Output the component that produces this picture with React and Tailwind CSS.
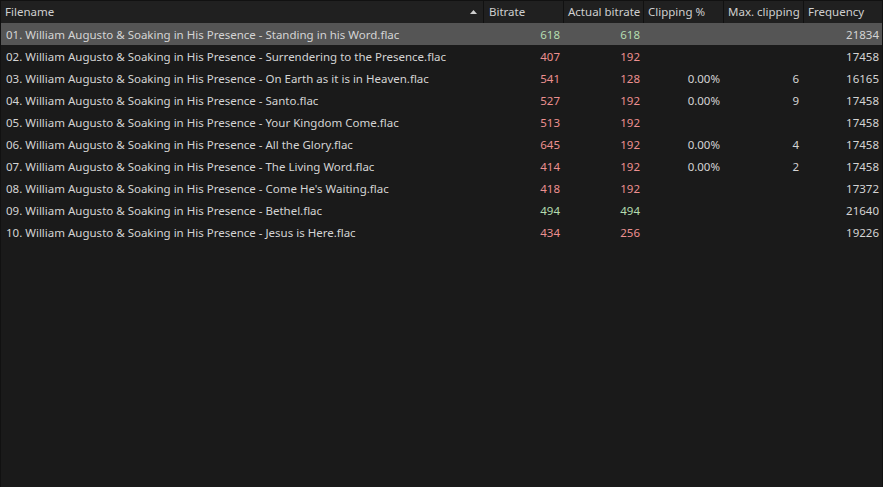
import React from 'react';

const rows = [
  { name: '01. William Augusto & Soaking in His Presence - Standing in his Word.flac', bitrate: 618, actual: 618, clip: '', max: '', freq: 21834, good: true },
  { name: '02. William Augusto & Soaking in His Presence - Surrendering to the Presence.flac', bitrate: 407, actual: 192, clip: '', max: '', freq: 17458 },
  { name: '03. William Augusto & Soaking in His Presence - On Earth as it is in Heaven.flac', bitrate: 541, actual: 128, clip: '0.00%', max: 6, freq: 16165 },
  { name: '04. William Augusto & Soaking in His Presence - Santo.flac', bitrate: 527, actual: 192, clip: '0.00%', max: 9, freq: 17458 },
  { name: '05. William Augusto & Soaking in His Presence - Your Kingdom Come.flac', bitrate: 513, actual: 192, clip: '', max: '', freq: 17458 },
  { name: '06. William Augusto & Soaking in His Presence - All the Glory.flac', bitrate: 645, actual: 192, clip: '0.00%', max: 4, freq: 17458 },
  { name: '07. William Augusto & Soaking in His Presence - The Living Word.flac', bitrate: 414, actual: 192, clip: '0.00%', max: 2, freq: 17458 },
  { name: "08. William Augusto & Soaking in His Presence - Come He's Waiting.flac", bitrate: 418, actual: 192, clip: '', max: '', freq: 17372 },
  { name: '09. William Augusto & Soaking in His Presence - Bethel.flac', bitrate: 494, actual: 494, clip: '', max: '', freq: 21640, good: true },
  { name: '10. William Augusto & Soaking in His Presence - Jesus is Here.flac', bitrate: 434, actual: 256, clip: '', max: '', freq: 19226 },
];

const App = () => {
  return (
    <div
      className="w-[883px] h-[487px] bg-[#1a1a1a] text-[11.5px] text-[#d4d4d4] overflow-hidden border-x border-[#111] whitespace-nowrap"
      style={{ fontFamily: '"Noto Sans", "Open Sans", sans-serif' }}
    >
      {/* Header */}
      <div className="flex h-[23px] bg-[#202020] border-t border-[#111] text-[#cfcfcf] leading-[22px]">
        <div className="w-[483px] flex items-center justify-between pl-[4px] pr-[6px] border-r border-[#111]">
          <span>Filename</span>
          <svg width="7" height="4" viewBox="0 0 7 4">
            <path d="M0 4 L3.5 0 L7 4 Z" fill="#cfcfcf" />
          </svg>
        </div>
        <div className="w-[80px] pl-[5px] border-r border-[#111] overflow-hidden">Bitrate</div>
        <div className="w-[80px] pl-[4px] border-r border-[#111] overflow-hidden">Actual bitrate</div>
        <div className="w-[80px] pl-[4px] border-r border-[#111] overflow-hidden">Clipping %</div>
        <div className="w-[80px] pl-[4px] border-r border-[#111] overflow-hidden">Max. clipping</div>
        <div className="flex-1 pl-[4px] overflow-hidden">Frequency</div>
      </div>

      {/* Rows */}
      {rows.map((r, i) => {
        const numColor = r.good ? 'text-[#b4dcb0]' : 'text-[#ec9090]';
        return (
          <div
            key={i}
            className={`flex h-[22px] leading-[23px] ${i === 0 ? 'bg-[#555555]' : ''}`}
          >
            <div className="w-[484px] pl-[5px] overflow-hidden">{r.name}</div>
            <div className={`w-[80px] text-right pr-[5px] ${numColor}`}>{r.bitrate}</div>
            <div className={`w-[80px] text-right pr-[5px] ${numColor}`}>{r.actual}</div>
            <div className="w-[80px] text-right pr-[5px]">{r.clip}</div>
            <div className="w-[80px] text-right pr-[6px]">{r.max}</div>
            <div className="flex-1 text-right pr-[3px]">{r.freq}</div>
          </div>
        );
      })}
    </div>
  );
};

export default App;
